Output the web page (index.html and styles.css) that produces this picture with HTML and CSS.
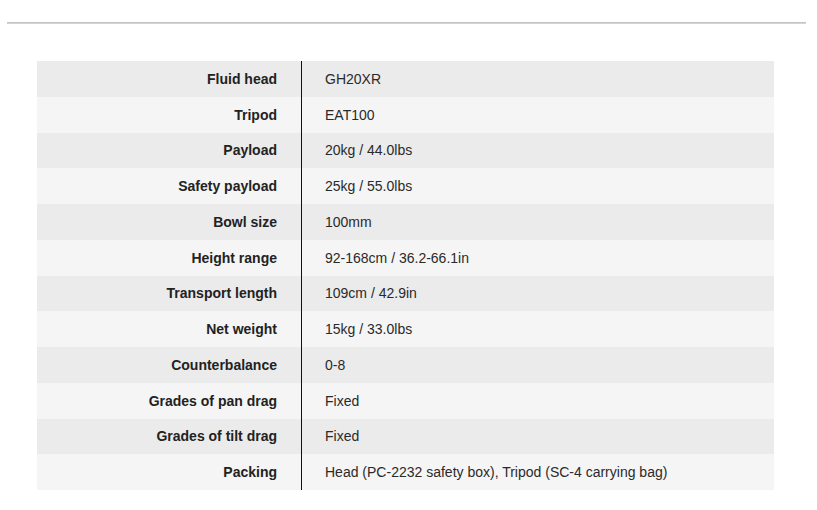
FILE: index.html
```html
<!DOCTYPE html>
<html>
<head>
<meta charset="utf-8">
<link rel="stylesheet" href="styles.css">
</head>
<body>
<div class="page">
  <div class="rule"></div>
  <div class="specs">
    <div class="row"><div class="label">Fluid head</div><div class="value">GH20XR</div></div>
    <div class="row"><div class="label">Tripod</div><div class="value">EAT100</div></div>
    <div class="row"><div class="label">Payload</div><div class="value">20kg / 44.0lbs</div></div>
    <div class="row"><div class="label">Safety payload</div><div class="value">25kg / 55.0lbs</div></div>
    <div class="row"><div class="label">Bowl size</div><div class="value">100mm</div></div>
    <div class="row"><div class="label">Height range</div><div class="value">92-168cm / 36.2-66.1in</div></div>
    <div class="row"><div class="label">Transport length</div><div class="value">109cm / 42.9in</div></div>
    <div class="row"><div class="label">Net weight</div><div class="value">15kg / 33.0lbs</div></div>
    <div class="row"><div class="label">Counterbalance</div><div class="value">0-8</div></div>
    <div class="row"><div class="label">Grades of pan drag</div><div class="value">Fixed</div></div>
    <div class="row"><div class="label">Grades of tilt drag</div><div class="value">Fixed</div></div>
    <div class="row"><div class="label">Packing</div><div class="value">Head (PC-2232 safety box), Tripod (SC-4 carrying bag)</div></div>
  </div>
</div>
</body>
</html>
```

FILE: styles.css
```css
html, body {
  margin: 0;
  padding: 0;
  background: #ffffff;
}
body {
  font-family: "Liberation Sans", Arial, sans-serif;
  color: #222222;
}
.page {
  padding: 22px 11px 0 7px;
}
.rule {
  height: 1px;
  border-top: 1px solid #c3c3c3;
  background: #d4d4d4;
}
.specs {
  margin: 37px 32px 0 30px;
  display: grid;
  grid-auto-rows: 35.75px;
}
.row {
  display: grid;
  grid-template-columns: 265px 1fr;
  background: #ebebeb;
}
.row:nth-child(even) {
  background: #f5f5f5;
}
.label {
  display: flex;
  align-items: center;
  justify-content: flex-end;
  padding-right: 24px;
  border-right: 1px solid #111111;
  font-weight: bold;
  font-size: 14px;
}
.value {
  display: flex;
  align-items: center;
  padding-left: 23px;
  font-size: 14px;
  color: #2a2a2a;
}
```
